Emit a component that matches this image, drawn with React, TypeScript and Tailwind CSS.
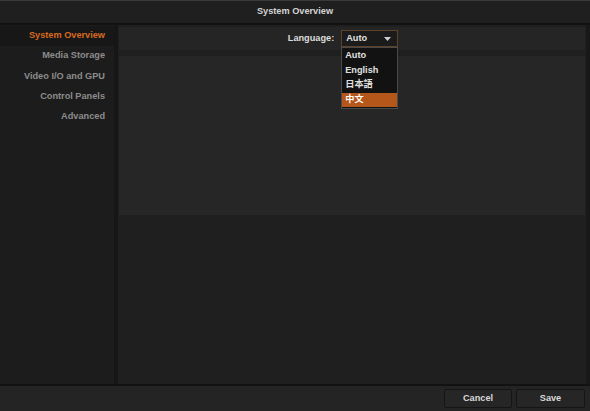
import React from "react";

const font = { fontFamily: '"Liberation Sans", Arial, "Noto Sans CJK SC", sans-serif' };

export default function App() {
  const items = ["System Overview", "Media Storage", "Video I/O and GPU", "Control Panels", "Advanced"];
  return (
    <div className="w-[590px] h-[411px] bg-[#1e1e1e] flex flex-col overflow-hidden text-[9.2px] font-bold" style={font}>
      {/* title bar */}
      <div className="h-[25px] shrink-0 border-t border-t-[#3a3a3a] border-b-2 border-b-[#121212] bg-[#1f1f1f] flex items-center justify-center text-[#d4d4d4]">
        System Overview
      </div>
      <div className="flex-1 flex min-h-0">
        {/* sidebar */}
        <div className="w-[114px] shrink-0 bg-[#1c1c1c] pt-[1px] flex flex-col">
          {items.map((t, i) => (
            <div
              key={t}
              className={
                "h-[20.25px] flex items-center justify-end pr-[9px] " +
                (i === 0 ? "bg-[#171717] text-[#d86a20]" : "text-[#8c8c8c]")
              }
            >
              {t}
            </div>
          ))}
        </div>
        <div className="w-[4px] shrink-0 bg-[#161616]" />
        {/* content */}
        <div className="flex-1 flex flex-col pl-[1px] pt-[2px] bg-[#1f1f1f]">
          <div className="h-[23px] mr-[1px] bg-[#252525] flex items-center justify-center relative">
            <div className="flex items-center gap-[7px] ml-[-18px]">
              <span className="text-[#dcdcdc]">Language:</span>
              <div className="relative">
                <div className="w-[57px] h-[17px] border border-[#5e4126] bg-[#1b1b1b] flex items-center justify-between pl-[4px] pr-[6px] text-[#e0e0e0]">
                  <span>Auto</span>
                  <svg width="7" height="4" viewBox="0 0 7 4">
                    <path d="M0 0 L7 0 L3.5 4 Z" fill="#cfcfcf" />
                  </svg>
                </div>
                <div className="absolute left-0 top-[17px] w-[57px] bg-[#121212] border border-[#4a4a4a] flex flex-col text-[#e0e0e0] py-[1px] z-10">
                  <div className="h-[14.5px] flex items-center pl-[3px]">Auto</div>
                  <div className="h-[14.5px] flex items-center pl-[3px]">English</div>
                  <div className="h-[14.5px] flex items-center pl-[3px]">日本語</div>
                  <div className="h-[14.5px] flex items-center pl-[3px] bg-[#b5561b] text-white">中文</div>
                </div>
              </div>
            </div>
          </div>
          <div className="h-[6px]" />
          <div className="h-[159px] mr-[1px] bg-[#262626]" />
        </div>
        <div className="w-[4px] shrink-0 bg-[#181818]" />
      </div>
      {/* bottom bar */}
      <div className="h-[27px] shrink-0 border-t-2 border-t-[#121212] bg-[#242424] flex items-center justify-end gap-[4px] pr-[5px]">
        <button className="w-[68px] h-[19px] rounded-[2px] border border-[#151515] bg-[#262626] text-[#d8d8d8] flex items-center justify-center">
          Cancel
        </button>
        <button className="w-[69px] h-[19px] rounded-[2px] border border-[#151515] bg-[#262626] text-[#d8d8d8] flex items-center justify-center">
          Save
        </button>
      </div>
    </div>
  );
}
